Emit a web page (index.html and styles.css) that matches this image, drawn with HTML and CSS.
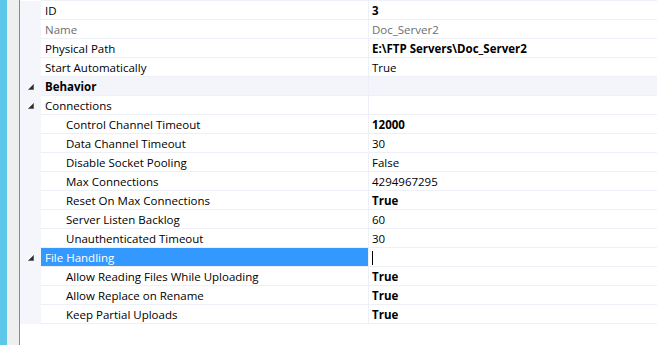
FILE: index.html
```html
<!DOCTYPE html>
<html>
<head>
<meta charset="utf-8">
<link rel="stylesheet" href="styles.css">
</head>
<body>
<div class="app">
  <div class="strip"></div>
  <div class="panel"></div>
  <div class="divider"></div>
  <div class="grid">
    <div class="toprule"></div>
    <div class="row"><div class="gut"></div><div class="name">ID</div><div class="val bold">3</div></div>
    <div class="row"><div class="gut"></div><div class="name dim">Name</div><div class="val dim">Doc_Server2</div></div>
    <div class="row"><div class="gut"></div><div class="name">Physical Path</div><div class="val bold">E:\FTP Servers\Doc_Server2</div></div>
    <div class="row"><div class="gut"></div><div class="name">Start Automatically</div><div class="val">True</div></div>
    <div class="row cat"><div class="gut"><svg class="tri" width="6" height="6" viewBox="0 0 6 6"><polygon points="5.5,0.5 5.5,5.5 0.5,5.5"/></svg></div><div class="name bold">Behavior</div><div class="val"></div></div>
    <div class="row"><div class="gut"><svg class="tri" width="6" height="6" viewBox="0 0 6 6"><polygon points="5.5,0.5 5.5,5.5 0.5,5.5"/></svg></div><div class="name">Connections</div><div class="val"></div></div>
    <div class="row"><div class="gut"></div><div class="name sub">Control Channel Timeout</div><div class="val bold">12000</div></div>
    <div class="row"><div class="gut"></div><div class="name sub">Data Channel Timeout</div><div class="val">30</div></div>
    <div class="row"><div class="gut"></div><div class="name sub">Disable Socket Pooling</div><div class="val">False</div></div>
    <div class="row"><div class="gut"></div><div class="name sub">Max Connections</div><div class="val">4294967295</div></div>
    <div class="row"><div class="gut"></div><div class="name sub">Reset On Max Connections</div><div class="val bold">True</div></div>
    <div class="row"><div class="gut"></div><div class="name sub">Server Listen Backlog</div><div class="val">60</div></div>
    <div class="row"><div class="gut"></div><div class="name sub">Unauthenticated Timeout</div><div class="val">30</div></div>
    <div class="row"><div class="gut"><svg class="tri" width="6" height="6" viewBox="0 0 6 6"><polygon points="5.5,0.5 5.5,5.5 0.5,5.5"/></svg></div><div class="name selected">File Handling</div><div class="val"><span class="caret"></span></div></div>
    <div class="row"><div class="gut"></div><div class="name sub">Allow Reading Files While Uploading</div><div class="val bold">True</div></div>
    <div class="row"><div class="gut"></div><div class="name sub">Allow Replace on Rename</div><div class="val bold">True</div></div>
    <div class="row"><div class="gut"></div><div class="name sub">Keep Partial Uploads</div><div class="val bold">True</div></div>
  </div>
</div>
</body>
</html>
```
FILE: styles.css
```css
html, body {
  margin: 0;
  padding: 0;
  background: #ffffff;
}
.app {
  display: flex;
  width: 657px;
  height: 345px;
  overflow: hidden;
  font-family: "Open Sans", "Noto Sans", sans-serif;
  font-size: 11.5px;
  color: #000;
}
.strip {
  width: 7px;
  background: #5cc7e8;
}
.panel {
  width: 12px;
  background: #efefef;
}
.divider {
  width: 1px;
  background: #8a8a8a;
}
.grid {
  flex: 1;
  display: flex;
  flex-direction: column;
}
.toprule {
  height: 1px;
  margin-left: 21px;
  background: #edf0f7;
}
.row {
  display: grid;
  grid-template-columns: 21px 327px 1fr;
  height: 19px;
}
.gut {
  background: #f4f6fb;
  display: flex;
  align-items: center;
  justify-content: flex-start;
  padding-left: 8px;
}
.tri {
  display: block;
  margin-top: 1px;
}
.tri polygon {
  fill: #2b2b2b;
  stroke: #666666;
  stroke-width: 1;
}
.name, .val {
  border-bottom: 1px solid #edf0f7;
  padding-top: 1px;
  line-height: 17px;
  height: 17px;
  white-space: nowrap;
  overflow: hidden;
}
.name {
  padding-left: 4px;
}
.val {
  border-left: 1px solid #edf0f7;
  padding-left: 3px;
}
.sub {
  padding-left: 25px;
}
.bold {
  font-weight: 700;
}
.dim {
  color: #6d6d6d;
}
.cat .name, .cat .val {
  background: #f3f5fa;
}
.selected {
  background: #3399ff;
  color: #ffffff;
}
.caret {
  display: inline-block;
  width: 1px;
  height: 14px;
  background: #000;
  vertical-align: middle;
  margin-top: -2px;
}
```
